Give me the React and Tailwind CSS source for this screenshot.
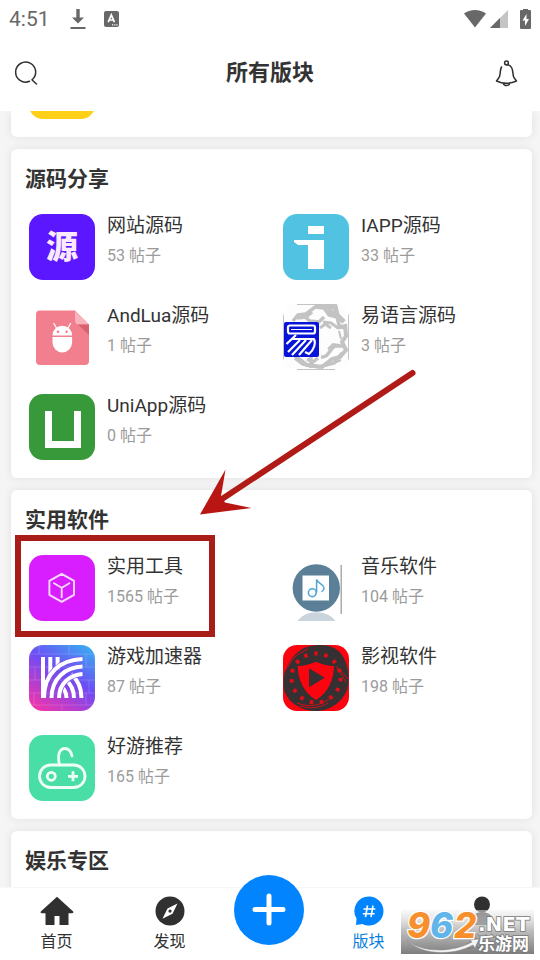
import React from "react";

const SourceIcon = () => (
    <span className="flex h-full w-full items-center justify-center bg-[#5b17ff] text-[32px] leading-none font-black text-[#fbeaff]">
        源
    </span>
);

const IappIcon = () => (
    <svg viewBox="0 0 66 66" className="h-full w-full bg-[#51c2e1]" aria-hidden="true">
        <path d="M25 12h16v8H25zM11 26h30v29H25V31H15l-4-3z" fill="#fff" />
    </svg>
);

const AndLuaIcon = () => (
    <svg viewBox="0 0 66 66" className="h-full w-full" aria-hidden="true">
        <path d="M11 6.500h35l14 14V57a4 4 0 0 1-4 4H11a4 4 0 0 1-4-4V10.500a4 4 0 0 1 4-4z" fill="#f27f8e" />
        <path d="M46 7l14 13.500H50a4 4 0 0 1-4-4z" fill="#f9b3ba" />
        <path d="M49 20.500h11V31z" fill="#d9606f" />
        <path d="M23.500 31.500a9.800 9.800 0 0 1 19.600 0zM23.500 33h19.600v5.500a9.800 10 0 0 1-19.600 0z" fill="#fff" />
        <path d="M27.500 24l-2.600-4.500M39 24l2.600-4.500" stroke="#fff" strokeWidth="1.300" strokeLinecap="round" />
        <circle cx="29" cy="27.700" r="1.300" fill="#f27f8e" />
        <circle cx="37.600" cy="27.700" r="1.300" fill="#f27f8e" />
    </svg>
);

const YiIcon = () => (
    <svg viewBox="0 0 66 66" className="h-full w-full bg-[#fdfdfd]" aria-hidden="true">
        <g fill="none" stroke="#c3c3c3">
            <path d="M10 17l5-6 8-1 9-7 9 1 5 7 8 2 2 8 7 4M14 14l9-1 6-5M22 13l5 4 9 1 5-5" strokeWidth="3.500" />
            <path d="M32 1l12 2 8-1 2 9 7 7M45 1l3 7 6 4" strokeWidth="5" />
            <path d="M40 18l8 1 7 5 6-1M37 24l5-4 6 4" strokeWidth="3" />
            <path d="M62 20l1 12-4 6 4 8-6 7-8 2-10 8-15-2-12-9" strokeWidth="4" />
            <path d="M38 53c8 1 8-8 14-11l10 0M12 54l8 6 16 3 15-4 8-10M24 55l6 3 5-4M28 53v11" strokeWidth="3.500" />
            <path d="M56 27l2 8M45 45l5-5 7 1M49 60l9-4" strokeWidth="2" />
            <path d="M.500 10v46M65.500 10v46M14 .500h38M14 65.500h38" strokeWidth="1" />
        </g>
        <rect x="1" y="18" width="35" height="35" rx="2" fill="#0815d8" />
        <g fill="none" stroke="#fff" strokeLinejoin="round">
            <rect x="5" y="21.500" width="27" height="8" rx="2" strokeWidth="2.200" />
            <path d="M8 25.500h21" strokeWidth="1" />
            <path d="M13 31L3.500 40M9 35h22c2 4 0 11-5 15l-4-2M17 36L5 48M23 36L9 51M29 36L16 51" strokeWidth="2.200" />
        </g>
    </svg>
);

const UniAppIcon = () => (
    <svg viewBox="0 0 66 66" className="h-full w-full bg-[#38993a]" aria-hidden="true">
        <path d="M16 17h7v30h22V17h7v37H16z" fill="#fff" />
    </svg>
);

const ToolsIcon = () => (
    <svg viewBox="0 0 66 66" className="h-full w-full bg-[#d81eff]" aria-hidden="true">
        <path
            d="M32.700 18.800l12.300 7v14l-12.300 7-12.300-7v-14zM25 28.300l7.700 4.500 7.700-4.500M32.700 32.800v9.500"
            fill="none"
            stroke="#fbdcff"
            strokeWidth="1.900"
            strokeLinejoin="round"
            strokeLinecap="round"
        />
    </svg>
);

const MusicIcon = () => (
    <svg viewBox="0 0 66 66" className="h-full w-full" aria-hidden="true">
        <circle cx="33.300" cy="33" r="23.700" fill="#5a7f97" />
        <path d="M19.500 20.500h26.500v25H19.500z" fill="#fcfeff" />
        <circle cx="29.300" cy="37.700" r="3.900" fill="none" stroke="#51a5cf" strokeWidth="1.600" />
        <path d="M33.600 37.500V24.500c1 4 7 4.500 7.500 8.500 0 1.800-1 2.800-2.500 3.800" fill="none" stroke="#51a5cf" strokeWidth="1.500" />
        <path d="M14.500 66c4-5.500 11-8.800 19-8.800S48.500 60.500 52.500 66z" fill="#c9d4dd" />
        <path d="M58.200 10v49" stroke="#9b9fa3" strokeWidth="1.300" />
    </svg>
);

const MovieIcon = () => (
    <svg viewBox="0 0 66 66" className="h-full w-full bg-[#fb0410]" aria-hidden="true">
        <path d="M21 3C34-2 52-1 59 10c7 11 8 24 5 35-5 13-19 22-33 21C17 65 4 57 1 44-2 29 6 10 21 3z" fill="#353031" />
        <circle cx="33" cy="33" r="24.500" fill="none" stroke="#e00c17" strokeWidth="4" strokeDasharray="3.500 6.760" />
        <path d="M3 25C7 12 15 6 23 1M5 22C9 12 17 8 25 4M14 58c12 5 24 2 32-4M17 61c10 3 20 2 28-3M56 24l9 10M53 21l10 16" fill="none" stroke="#e00c17" strokeWidth=".9" />
        <path d="M33 14.500c6 3.500 12 5 19.500 5.500 0 16-6 29-19.500 36.500C20 49 13.500 36 13.500 20c8-.5 13.500-2 19.500-5.500z" fill="#353031" />
        <path d="M33 16.700c6 2.700 11 4 18 4.300-.3 14-6 27-18 34C21 48 15 35 14.700 21c7-.3 12.300-1.600 18.300-4.300z" fill="#fb0410" />
        <path d="M26 23.300l15.700 9.400L26 42.300z" fill="#353031" />
    </svg>
);

const BoosterIcon = () => (
    <svg viewBox="0 0 66 66" className="h-full w-full" aria-hidden="true">
        <defs>
            <linearGradient id="booster" x1="0.150" y1="1" x2="0.800" y2="0">
                <stop offset="0" stopColor="#ef35ab" />
                <stop offset="0.280" stopColor="#b53dcf" />
                <stop offset="0.580" stopColor="#6c4df5" />
                <stop offset="1" stopColor="#3fa4f2" />
            </linearGradient>
        </defs>
        <path d="M0 0h66v66H0z" fill="url(#booster)" />
        <path d="M0 9h66M0 22h66M0 35h66M0 48h66M0 60h66M10 0v9M40 0v9M57 9v13M6 22v13M60 35v13M5 48v12M33 60v6M57 48v12" stroke="#fff" strokeOpacity=".16" />
        <g fill="none" stroke="#fff" strokeWidth="4">
            <path d="M21.300 12v20M28.600 12v13" />
            <path d="M32 41c4 4 5.500 8 5.500 12M36.500 34.500c6 5 8.500 11 8.500 18.500M42 29c7 6 10.500 14 10.500 24" />
        </g>
        <g fill="none" stroke="#7850ee" strokeWidth="5.500">
            <path d="M53 14C32 15 15 28 15 53M53 21.500C37 22 22.500 33 22.500 53M53 29C41 30 30 38 30 53" />
        </g>
        <g fill="none" stroke="#fff" strokeWidth="4">
            <path d="M14 12v41M53.500 14C31 15 15 28 15 53M53.500 21.500C37 22 22.500 33 22.500 53M53.500 29C41 30 30 38 30 53" />
        </g>
    </svg>
);

const GamepadIcon = () => (
    <svg viewBox="0 0 66 66" className="h-full w-full bg-[#48dea6]" aria-hidden="true">
        <g fill="none" stroke="#effff7" strokeWidth="2.800">
            <rect x="10.500" y="30" width="45.500" height="22.500" rx="11.200" />
            <circle cx="22.300" cy="41.300" r="4" />
            <path d="M44 36.300v10M39 41.300h10" />
            <path d="M30.500 29.500c-2.200-9-.5-15.500 5-16 4.500-.2 6.500 3 7.500 7.500" strokeLinecap="round" />
        </g>
    </svg>
);

const sections = [
    {
        title: "源码分享",
        items: [
            { name: "网站源码", count: 53, Icon: SourceIcon },
            { name: "IAPP源码", count: 33, Icon: IappIcon },
            { name: "AndLua源码", count: 1, Icon: AndLuaIcon },
            { name: "易语言源码", count: 3, Icon: YiIcon },
            { name: "UniApp源码", count: 0, Icon: UniAppIcon },
        ],
    },
    {
        title: "实用软件",
        arrow: true,
        items: [
            { name: "实用工具", count: 1565, Icon: ToolsIcon, marked: true },
            { name: "音乐软件", count: 104, Icon: MusicIcon },
            { name: "游戏加速器", count: 87, Icon: BoosterIcon },
            { name: "影视软件", count: 198, Icon: MovieIcon },
            { name: "好游推荐", count: 165, Icon: GamepadIcon },
        ],
    },
    { title: "娱乐专区", items: [] },
];

const StatusBar = () => (
    <div className="flex h-[38px] items-center pr-2 pl-[9px] text-[#686868]">
        <span className="text-[21px] leading-6">4:51</span>
        <svg width="16" height="22" viewBox="0 0 16 22" className="ml-5" fill="currentColor" aria-hidden="true">
            <path d="M6.300 1h3.400v8.500H14L8 15.500 2 9.500h4.300zM.500 19h15v2H.500z" />
        </svg>
        <svg width="15" height="16" viewBox="0 0 15 16" className="ml-[18px]" aria-hidden="true">
            <rect width="15" height="16" rx="2" fill="currentColor" />
            <path d="M4.200 11.200L7.300 4l3.100 7.200M5.300 9h4" fill="none" stroke="#fff" strokeWidth="1.700" />
            <path d="M8 13.300h1.200v1.200H8zM10.200 13.300h1.200v1.200h-1.200zM12.300 13.300h1.200v1.200h-1.200z" fill="#fff" />
        </svg>
        <svg width="22" height="20" viewBox="0 0 22 20" className="ml-auto" fill="currentColor" aria-hidden="true">
            <path d="M0 4.500C6-.2 16-.2 22 4.500L11 18.500z" />
        </svg>
        <svg width="18" height="20" viewBox="0 0 18 20" className="ml-1" aria-hidden="true">
            <path d="M18 1v18H0z" fill="#c4c4c4" />
            <path d="M10 9v10H0z" fill="currentColor" />
        </svg>
        <svg width="11" height="20" viewBox="0 0 11 20" className="mr-px ml-3" aria-hidden="true">
            <path d="M3 0h5v1h2a1 1 0 0 1 1 1v17a1 1 0 0 1-1 1H1a1 1 0 0 1-1-1V2a1 1 0 0 1 1-1h2z" fill="currentColor" />
            <path d="M6.500 5L2.500 11.500H5V17l4-7H6.500z" fill="#fff" />
        </svg>
    </div>
);

const Header = () => (
    <header className="flex h-[73px] items-center justify-between pr-[22px] pb-[3px] pl-[14px]">
        <button type="button" aria-label="搜索" className="flex w-6">
            <svg width="24" height="24" viewBox="0 0 24 24" fill="none" stroke="#303030" strokeWidth="1.500" strokeLinecap="round">
                <path d="M15.500 20.300A10 10 0 1 1 18 18.800M18.400 19.200L22.500 23" />
            </svg>
        </button>
        <h1 className="pl-2 text-[22px] leading-8 font-bold">所有版块</h1>
        <button type="button" aria-label="通知" className="flex w-6 justify-end">
            <svg width="24" height="28" viewBox="0 0 24 28" fill="none" stroke="#303030" strokeWidth="1.500" strokeLinejoin="round" strokeLinecap="round">
                <circle cx="12.500" cy="4" r="1.900" />
                <path d="M7.500 8C6 10.500 6.500 14.500 5.500 17.500c-.7 2-2 3.200-3 4.500 6 2.700 14 2.700 20 0-1-1.300-2.300-2.500-3-4.500-1-3 .3-11-6.500-12M9.300 24.300c.7 3 5.700 3 6.400 0" />
            </svg>
        </button>
    </header>
);

const BoardItem = ({ name, count, Icon, marked }) => (
    <li className="relative">
        <a href="#" className="flex gap-3">
            <span className="block h-[66px] w-[66px] shrink-0 overflow-hidden rounded-[14px]">
                <Icon />
            </span>
            <span className="flex min-w-0 flex-col gap-[7px]">
                <span className="text-[19px] leading-6 whitespace-nowrap">{name}</span>
                <span className="text-base leading-[22px] text-[#9b9b9b]">{count} 帖子</span>
            </span>
        </a>
        {marked && (
            <span className="pointer-events-none absolute -top-5 -left-[14px] h-[102px] w-[200px] border-6 border-[#a91d18]" />
        )}
    </li>
);

const Arrow = () => (
    <svg width="220" height="150" viewBox="0 0 220 150" className="pointer-events-none absolute -top-[122px] left-[187px]" aria-hidden="true">
        <path d="M214.500 5L24 131" stroke="#b01b17" strokeWidth="6" strokeLinecap="round" />
        <path d="M2 146.500L27.500 101.500 23 128l4 6.500 26.500 5.500z" fill="#b91613" />
    </svg>
);

const BoardSection = ({ title, items, arrow }) => (
    <section className="relative rounded-md bg-white pt-4 pb-[18px] shadow-[0_0_10px_rgba(0,0,0,0.09)]">
        <h2 className="mb-[21px] px-[14px] text-[21px] leading-7 font-bold">{title}</h2>
        <ul className="grid grid-cols-2 gap-x-[5px] gap-y-6 pl-[18px]">
            {items.map((item) => (
                <BoardItem key={item.name} {...item} />
            ))}
        </ul>
        {arrow && <Arrow />}
    </section>
);

const NavItem = ({ label, active, children }) => (
    <a href="#" className={`flex flex-1 flex-col items-center gap-1 pt-2 pb-1.5 ${active ? "text-[#087fe0]" : "text-[#303030]"}`}>
        <svg width="34" height="30" viewBox="0 0 34 30" aria-hidden="true">
            {children}
        </svg>
        <span className="text-base leading-6">{label}</span>
    </a>
);

const BottomNav = () => (
    <nav className="relative flex items-start border-t border-[#f7f7f7] bg-white pr-0.5">
        <NavItem label="首页">
            <path d="M17 .8L.800 15.500c-.5 1 0 1.700 1 1.700H5.500V29h9v-9h5v9h9V17.200h3.700c1 0 1.500-.7 1-1.700z" fill="#303030" />
        </NavItem>
        <NavItem label="发现">
            <circle cx="17" cy="15" r="14.500" fill="#303030" />
            <path d="M24.500 7.500l-5 10.200-10 5 5-10.200z" fill="#fff" />
            <circle cx="17" cy="15.100" r="1.600" fill="#303030" />
        </NavItem>
        <button
            type="button"
            aria-label="发布"
            className="-mt-[13px] mx-2 flex h-[70px] w-[70px] shrink-0 items-center justify-center rounded-full bg-[#0284ff]"
        >
            <svg width="34" height="34" viewBox="0 0 34 34" stroke="#fff" strokeWidth="5" strokeLinecap="round" aria-hidden="true">
                <path d="M17 3v27M3 16.500h28" />
            </svg>
        </button>
        <NavItem label="版块" active>
            <path d="M17 .5A14.500 14.500 0 1 1 17 29.500c-2.500 0-4.500-.6-6.500-1.600L4 29l.5-6.500A14.500 14.500 0 0 1 17 .5z" fill="#0284ff" />
            <path d="M15.500 9.500l-2 11.500M21 9.500L19 21M11.500 13h11.800M10.800 17.800h11.800" stroke="#fff" strokeWidth="1.600" fill="none" />
        </NavItem>
        <NavItem label="我的">
            <circle cx="17" cy="8.500" r="8" fill="#303030" />
            <path d="M4.500 29c0-8 5-13 12.500-13s12.500 5 12.500 13z" fill="#303030" />
        </NavItem>
    </nav>
);

const Watermark = () => (
    <svg width="134" height="46" viewBox="0 0 134 46" className="pointer-events-none absolute right-[5px] bottom-[5px] overflow-visible" role="img" aria-label="962.NET 乐游网">
        <defs>
            <linearGradient id="plate" x1="0" y1="0" x2="0" y2="1">
                <stop offset="0" stopColor="#f2f2f2" stopOpacity="0.500" />
                <stop offset="0.450" stopColor="#b4b4b4" stopOpacity="0.850" />
                <stop offset="1" stopColor="#727272" stopOpacity="0.920" />
            </linearGradient>
        </defs>
        <path d="M0 1h133v44H0z" fill="url(#plate)" />
        <path d="M6 31c14 13 46 13 65 2l-2-2 9-1-4 9-2-3C50 48 18 45 6 31z" fill="#f5f5f5" stroke="#888" strokeWidth=".5" />
        <g fontFamily="Inter, Roboto, sans-serif" fontWeight="800" fontStyle="italic" fontSize="35" stroke="#fff" strokeWidth="2.500" paintOrder="stroke">
            <text x="6" y="29" fill="#f78f2d">9</text>
            <text x="29" y="29" fill="#62b5ea">6</text>
            <text x="53" y="29" fill="#f78f2d">2</text>
        </g>
        <g fill="#fff" stroke="#777" strokeWidth="1.500" paintOrder="stroke">
            <text x="77" y="22" fontFamily="'DejaVu Sans', sans-serif" fontWeight="700" fontSize="20">.NET</text>
            <text x="77" y="41" fontFamily="'Noto Sans CJK SC', sans-serif" fontWeight="700" fontSize="17">乐游网</text>
        </g>
    </svg>
);

export default function App() {
    return (
        <div className="relative flex h-screen flex-col overflow-hidden bg-white font-[Roboto,'Noto_Sans_CJK_SC',sans-serif] text-[#333]">
            <StatusBar />
            <Header />
            <main className="flex min-h-0 flex-1 flex-col gap-3 overflow-hidden bg-[#f5f5f5] pr-2 pl-[11px]">
                <section className="shrink-0 rounded-b-md bg-white pb-[18px] pl-[18px] shadow-[0_0_10px_rgba(0,0,0,0.09)]">
                    <div className="flex h-2 items-end overflow-hidden">
                        <span className="block h-[66px] w-[66px] shrink-0 rounded-[14px] bg-[#ffd015]" />
                    </div>
                </section>
                {sections.map((section) => (
                    <BoardSection key={section.title} {...section} />
                ))}
            </main>
            <BottomNav />
            <Watermark />
        </div>
    );
}
